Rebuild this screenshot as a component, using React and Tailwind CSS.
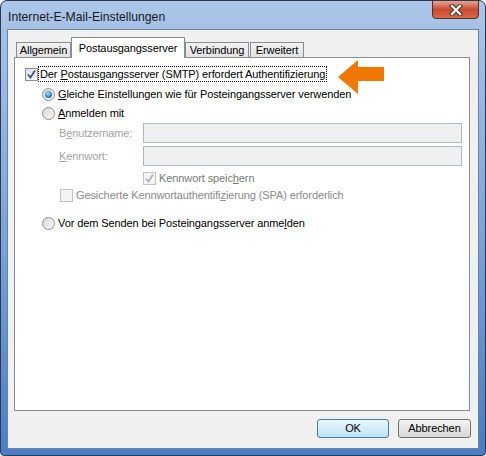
import React from 'react';

const font = { fontFamily: '"Liberation Sans", Arial, sans-serif' };

function CheckBox({ checked, disabled }) {
  return (
    <div
      className={
        'w-[13px] h-[13px] shrink-0 border flex items-center justify-center ' +
        (disabled
          ? 'border-[#c4c4c4] bg-[#f4f4f4]'
          : 'border-[#8e8f8f] bg-gradient-to-br from-[#dcdcdc] to-[#fbfbfb]')
      }
    >
      {checked && (
        <svg width="11" height="11" viewBox="0 0 11 11">
          <path d="M2 5.5 L4.5 8.5 L9 1.5" fill="none"
            stroke={disabled ? '#b3b3b3' : '#3d5688'} strokeWidth="1.8" />
        </svg>
      )}
    </div>
  );
}

function Radio({ checked }) {
  return (
    <div className="w-[13px] h-[13px] shrink-0 rounded-full border border-[#8e8f8f] bg-gradient-to-br from-[#d6d6d6] to-[#fafafa] flex items-center justify-center">
      {checked && (
        <div className="w-[7px] h-[7px] rounded-full bg-[radial-gradient(circle_at_40%_35%,#a6e4ff,#2f86c9_55%,#174a82)]" />
      )}
    </div>
  );
}

function Tab({ label, active, className }) {
  if (active) {
    return (
      <div className={'relative z-10 -mb-px h-[21px] bg-white border border-b-0 border-[#898c95] flex items-start justify-center pt-[2px] ' + className}>
        {label}
      </div>
    );
  }
  return (
    <div className={'h-[15px] border border-b-0 border-[#898c95] bg-gradient-to-b from-[#f2f2f2] to-[#e3e3e3] flex items-center justify-center ' + className}>
      {label}
    </div>
  );
}

export default function App() {
  return (
    <div style={font}
      className="w-[486px] h-[456px] rounded-t-[7px] rounded-b-[4px] border border-[#2b3a52] bg-gradient-to-b from-[#abc6e8] via-[#7ea5d9] to-[#4a7dc4] flex flex-col px-[6px] pb-[6px] overflow-hidden">
      {/* title bar */}
      <div className="h-[28px] flex items-start justify-between">
        <span className="pl-[1px] pt-[7px] text-[12.2px] text-[#1a1a1a]">Internet-E-Mail-Einstellungen</span>
        <div className="w-[47px] h-[19px] -mt-px rounded-b-[4px] border border-[#5b2a22] bg-gradient-to-b from-[#e6a494] via-[#c9482f] to-[#d9694a] flex items-center justify-center">
          <svg width="16" height="12" viewBox="0 0 16 12">
            <path d="M4 2 L12 10 M12 2 L4 10" stroke="#3b2520" strokeWidth="4.2" strokeLinecap="square" />
            <path d="M4 2 L12 10 M12 2 L4 10" stroke="#ffffff" strokeWidth="2.4" strokeLinecap="square" />
          </svg>
        </div>
      </div>

      {/* client area */}
      <div className="flex-1 border border-[#6a83a8] bg-[#f0f0f0] flex flex-col pl-[6px] pr-[8px] text-[11px] tracking-[-0.1px] text-black">
        <div className="h-[27px] flex items-end pl-[2px]">
          <Tab label="Allgemein" className="w-[55px]" />
          <Tab label="Postausgangsserver" active className="w-[114px]" />
          <Tab label="Verbindung" className="w-[64px]" />
          <Tab label="Erweitert" className="w-[54px] ml-px" />
        </div>

        <div className="relative h-[354px] bg-white border border-[#898c95] flex flex-col pl-[10px] pr-[7px]">
          {/* annotation arrow */}
          <svg className="absolute left-[323px] top-[2px]" width="47" height="35" viewBox="0 0 47 35">
            <polygon points="0,17 20,0 20,7 46,7 46,21 20,21 20,34" fill="#f07700" />
          </svg>

          <div className="mt-[8px] h-[16px] flex items-center">
            <CheckBox checked />
            <span className="border border-dotted border-black px-[1px] leading-[14px]">
              Der <span className="underline">P</span>ostausgangsserver (SMTP) erfordert Authentifizierung
            </span>
          </div>

          <div className="mt-[4px] h-[16px] flex items-center ml-[17px] gap-[3px]">
            <Radio checked />
            <span><span className="underline">G</span>leiche Einstellungen wie für Posteingangsserver verwenden</span>
          </div>

          <div className="mt-[3px] h-[16px] flex items-center ml-[17px] gap-[3px]">
            <Radio />
            <span><span className="underline">A</span>nmelden mit</span>
          </div>

          <div className="mt-[2px] h-[20px] flex items-center ml-[34px]">
            <span className="w-[84px] text-[#a3a3a3]">B<span className="underline">e</span>nutzername:</span>
            <div className="flex-1 h-[20px] border border-[#abbad0] bg-[#f0f0f0]" />
          </div>

          <div className="mt-[3px] h-[20px] flex items-center ml-[34px]">
            <span className="w-[84px] text-[#a3a3a3]"><span className="underline">K</span>ennwort:</span>
            <div className="flex-1 h-[20px] border border-[#abbad0] bg-[#f0f0f0]" />
          </div>

          <div className="mt-[4px] h-[16px] flex items-center ml-[118px] gap-[3px] text-[#7a7a7a]">
            <CheckBox checked disabled />
            <span>Kennwort speic<span className="underline">h</span>ern</span>
          </div>

          <div className="mt-px h-[16px] flex items-center ml-[35px] gap-[3px] text-[#8a8a8a]">
            <CheckBox disabled />
            <span>Gesicherte Kennwortauthentifi<span className="underline">z</span>ierung (SPA) erforderlich</span>
          </div>

          <div className="mt-[12px] h-[16px] flex items-center ml-[17px] gap-[3px]">
            <Radio />
            <span>Vor dem Senden bei Posteingangsserver anme<span className="underline">l</span>den</span>
          </div>
        </div>

        <div className="mt-[8px] flex justify-end gap-[9px] -mr-px">
          <button className="w-[72px] h-[19px] rounded-[3px] border border-[#3c7fb1] bg-gradient-to-b from-[#eaf6fd] to-[#bfe2f5] text-black">OK</button>
          <button className="w-[73px] h-[19px] rounded-[3px] border border-[#707070] bg-gradient-to-b from-[#f3f3f3] to-[#d7d7d7] text-black">Abbrechen</button>
        </div>
      </div>
    </div>
  );
}
